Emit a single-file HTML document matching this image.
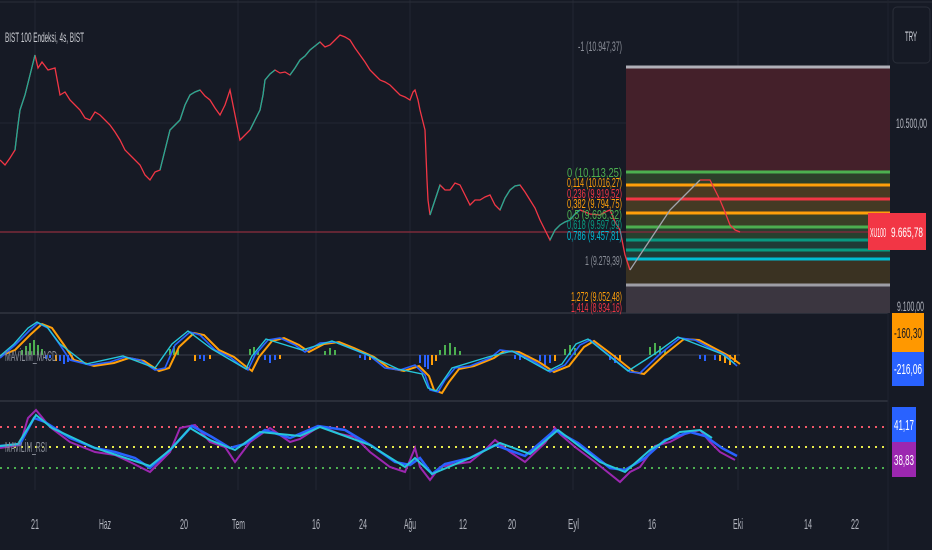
<!DOCTYPE html>
<html><head><meta charset="utf-8"><style>
html,body{margin:0;padding:0;background:#161a25;}
svg{display:block;font-family:"Liberation Sans",sans-serif;}
</style></head><body>
<svg width="932" height="550" viewBox="0 0 932 550" xmlns="http://www.w3.org/2000/svg">
<rect width="932" height="550" fill="#161a25"/>
<g stroke="#222632" stroke-width="1">
<line x1="0" y1="123" x2="888" y2="123"/>
<line x1="238" y1="0" x2="238" y2="490"/>
<line x1="316" y1="0" x2="316" y2="490"/>
<line x1="410" y1="0" x2="410" y2="490"/>
<line x1="573" y1="0" x2="573" y2="490"/>
<line x1="738" y1="0" x2="738" y2="490"/>
<line x1="35" y1="0" x2="35" y2="490"/>
</g>
<line x1="0" y1="2" x2="932" y2="2" stroke="#2a2e39"/>
<line x1="0" y1="313" x2="888" y2="313" stroke="#2a2e39" stroke-width="2"/>
<line x1="0" y1="401" x2="888" y2="401" stroke="#2a2e39" stroke-width="2"/>
<line x1="888" y1="0" x2="888" y2="550" stroke="#1f232e"/>

<rect x="626" y="66" width="264" height="106" fill="#44202a"/>
<rect x="626" y="172" width="264" height="13" fill="#2c3f2a"/>
<rect x="626" y="185" width="264" height="13" fill="#4a3a22"/>
<rect x="626" y="198" width="264" height="15" fill="#443a24"/>
<rect x="626" y="213" width="264" height="14" fill="#3a4026"/>
<rect x="626" y="227" width="264" height="13" fill="#27402e"/>
<rect x="626" y="240" width="264" height="19" fill="#1f3a36"/>
<rect x="626" y="259" width="264" height="26" fill="#3a3222"/>
<rect x="626" y="285" width="264" height="28" fill="#3b3640"/>
<g stroke-width="3">
<line x1="626" y1="67" x2="890" y2="67" stroke="#b0b0b8"/>
<line x1="626" y1="172" x2="890" y2="172" stroke="#4caf50"/>
<line x1="626" y1="185" x2="890" y2="185" stroke="#ff9f0a"/>
<line x1="626" y1="199" x2="890" y2="199" stroke="#f23645"/>
<line x1="626" y1="213" x2="890" y2="213" stroke="#ff9f0a"/>
<line x1="626" y1="227" x2="890" y2="227" stroke="#4caf50"/>
<line x1="626" y1="240" x2="890" y2="240" stroke="#089981"/>
<line x1="626" y1="250" x2="890" y2="250" stroke="#089981"/>
<line x1="626" y1="259" x2="890" y2="259" stroke="#00bcd4"/>
<line x1="626" y1="285" x2="890" y2="285" stroke="#9e9ea6"/>
</g>
<line x1="0" y1="232" x2="888" y2="232" stroke="#7a2a3a" stroke-width="1.5"/>
<polyline fill="none" stroke="#f23645" stroke-width="1.3" points="0,160 5,165 10,158 15,150 18,125 20,110 25,95 30,75 35,55 38,68 42,62 48,70 55,68 60,95 65,92 70,100 75,105 80,110 85,118 90,120 95,112 100,115 105,120 110,125 115,132 120,140 125,150 130,155 135,160 140,165 145,175 150,180 155,172 160,170 165,150 170,130 175,125 180,120 185,105 190,95 195,92 200,90 205,96 210,100 215,108 220,115 225,105 230,90 235,115 240,140 245,135 250,130 255,120 260,110 263,95 265,80 270,74 275,70 280,73 285,72 290,75 295,68 300,60 305,56 310,50 315,46 320,42 325,47 330,45 335,40 340,35 345,37 350,40 355,48 360,55 365,62 370,70 375,75 380,80 385,82 390,85 395,90 400,95 405,97 410,100 413,92 415,90 418,100 420,110 423,122 425,130 427,180 428,200 430,215 435,200 440,185 445,190 450,190 455,183 460,185 465,195 470,205 475,200 480,200 485,197 490,195 495,205 500,210 505,198 510,190 515,186 520,185 525,192 530,200 535,208 540,220 545,230 550,240 555,230 560,225 565,222 570,220 575,214 580,210 590,214 600,215 605,212 610,210 615,222 620,230 625,255 630,270"/>
<g fill="none" stroke="#22ab94" stroke-width="1.3">
<polyline points="15,150 18,125 20,110 25,95 30,75 35,55"/>
<polyline points="160,170 165,150 170,130 175,125 180,120 185,105 190,95 195,92 200,90"/>
<polyline points="250,130 255,120 260,110 263,95 265,80 270,74 275,70"/>
<polyline points="290,75 295,68 300,60 305,56 310,50 315,46 320,42"/>
<polyline points="430,215 435,200 440,185"/>
<polyline points="500,210 505,198 510,190 515,186 520,185"/>
<polyline points="550,240 555,230 560,225 565,222 570,220 575,214 580,210"/>
</g>
<polyline fill="none" stroke="#a0a4ad" stroke-width="1.3" points="630,270 640,255 650,240 660,225 670,210 680,200 690,190 700,180"/>
<polyline fill="none" stroke="#f23645" stroke-width="1.3" points="700,180 710,180 715,190 720,200 725,212 730,225 735,230 740,232"/>

<text x="5" y="42" fill="#c8cad0" font-size="14" textLength="79" lengthAdjust="spacingAndGlyphs">BIST 100 Endeksi, 4s, BIST</text>
<text x="578" y="51" fill="#8a8e98" font-size="14" textLength="44" lengthAdjust="spacingAndGlyphs">-1 (10.947,37)</text>
<g font-size="13">
<text x="567" y="177" fill="#4caf50" textLength="55" lengthAdjust="spacingAndGlyphs">0 (10.113,25)</text>
<text x="567" y="187" fill="#ff9f0a" textLength="55" lengthAdjust="spacingAndGlyphs">0,114 (10.016,27)</text>
<text x="567" y="198" fill="#f23645" textLength="55" lengthAdjust="spacingAndGlyphs">0,236 (9.919,52)</text>
<text x="567" y="208" fill="#ff9f0a" textLength="55" lengthAdjust="spacingAndGlyphs">0,382 (9.794,75)</text>
<text x="567" y="219" fill="#4caf50" textLength="55" lengthAdjust="spacingAndGlyphs">0,5 (9.696,32)</text>
<text x="567" y="229" fill="#089981" textLength="55" lengthAdjust="spacingAndGlyphs">0,618 (9.597,99)</text>
<text x="567" y="240" fill="#00bcd4" textLength="55" lengthAdjust="spacingAndGlyphs">0,786 (9.457,81)</text>
<text x="585" y="265" fill="#8a8e98" textLength="37" lengthAdjust="spacingAndGlyphs">1 (9.279,39)</text>
<text x="571" y="301" fill="#ff9f0a" textLength="51" lengthAdjust="spacingAndGlyphs">1,272 (9.052,48)</text>
<text x="571" y="312" fill="#f23645" textLength="51" lengthAdjust="spacingAndGlyphs">1,414 (8.934,16)</text>
</g>
<rect x="893" y="7" width="37" height="56" rx="4" fill="#161a25" stroke="#2a2e39"/>
<text x="905" y="41" fill="#d1d4dc" font-size="14" textLength="12" lengthAdjust="spacingAndGlyphs">TRY</text>
<text x="896" y="128" fill="#b2b5be" font-size="14" textLength="31" lengthAdjust="spacingAndGlyphs">10.500,00</text>
<text x="897" y="311" fill="#b2b5be" font-size="14" textLength="27" lengthAdjust="spacingAndGlyphs">9.100,00</text>
<rect x="868" y="213" width="20" height="37" fill="#f23645"/>
<text x="870" y="237" fill="#fff" font-size="13" textLength="16" lengthAdjust="spacingAndGlyphs">XU100</text>
<rect x="888" y="213" width="38" height="37" fill="#f23645"/>
<text x="891" y="237" fill="#fff" font-size="14" textLength="32" lengthAdjust="spacingAndGlyphs">9.665,78</text>

<line x1="0" y1="355" x2="740" y2="355" stroke="#3a3e4a"/>
<g stroke-width="2">
<path d="M22 355v-5M26 355v-9M30 355v-12M34 355v-15M38 355v-10M42 355v-6M170 355v-6M174 355v-9M178 355v-5M250 355v-6M254 355v-8M258 355v-4M325 355v-4M330 355v-7M335 355v-5M440 355v-5M445 355v-10M450 355v-12M455 355v-8M460 355v-4M565 355v-6M570 355v-10M575 355v-7M650 355v-8M655 355v-12M660 355v-9M665 355v-5" stroke="#4caf50"/>
<path d="M46 355v4M50 355v3M60 355v6M64 355v9M68 355v7M72 355v5M200 355v4M204 355v6M265 355v5M270 355v8M275 355v5M360 355v3M365 355v5M420 355v8M425 355v12M428 355v14M515 355v4M520 355v5M540 355v6M545 355v10M550 355v8M610 355v5M615 355v8M700 355v4M705 355v6M715 355v5" stroke="#2962ff"/>
<path d="M56 355v6M195 355v6M210 355v4M280 355v4M370 355v5M432 355v10M436 355v6M525 355v4M555 355v6M620 355v6M720 355v6M725 355v8M730 355v10M735 355v7" stroke="#ff9f0a"/>
</g>
<polyline fill="none" stroke="#ff9f0a" stroke-width="2" points="0,356 15,350 30,335 42,324 52,328 64,345 74,360 94,366 114,363 129,358 144,361 159,371 169,368 179,347 194,333 204,335 219,350 234,357 244,365 252,371 259,357 272,341 284,338 299,345 309,352 324,344 339,342 354,348 374,357 389,368 404,371 419,366 429,376 434,390 442,393 449,382 459,369 474,366 494,358 504,351 519,352 539,362 554,372 569,366 584,347 594,341 614,356 634,372 644,374 664,355 684,339 699,340 714,348 729,356 740,364"/>
<polyline fill="none" stroke="#2962ff" stroke-width="1.6" points="0,358 15,345 30,330 38,323 48,328 60,345 70,360 90,365 110,362 125,357 140,360 155,370 165,368 175,345 190,332 200,335 215,350 230,357 240,365 248,370 255,355 268,340 280,338 295,345 305,352 320,343 335,342 350,348 370,356 385,368 400,370 415,365 425,375 430,390 438,392 445,380 455,368 470,366 490,358 500,350 515,352 535,362 550,372 565,365 580,345 590,340 610,356 630,372 640,373 660,354 680,338 695,340 710,348 725,355 737,366"/>
<polyline fill="none" stroke="#26c6da" stroke-width="1.4" points="0,356 14,344 28,328 37,322 47,327 60,344 86,364 123,356 155,368 172,344 188,331 212,349 246,369 252,356 266,339 302,350 332,341 368,355 398,369 422,374 428,388 436,391 452,368 488,357 512,351 548,371 562,364 576,344 588,339 628,371 656,353 678,337 722,354 735,364"/>
<text x="5" y="361" fill="#8a8e98" font-size="15" textLength="52" lengthAdjust="spacingAndGlyphs">MAVİLİM_MACD</text>
<rect x="892" y="313" width="32" height="39" fill="#ff9800"/>
<text x="894" y="338" fill="#131722" font-size="15" textLength="28" lengthAdjust="spacingAndGlyphs">-160,30</text>
<rect x="892" y="352" width="32" height="34" fill="#2962ff"/>
<text x="894" y="374" fill="#fff" font-size="15" textLength="28" lengthAdjust="spacingAndGlyphs">-216,06</text>

<g stroke-width="2" stroke-dasharray="2 5">
<line x1="0" y1="427" x2="888" y2="427" stroke="#f0566a"/>
<line x1="0" y1="447" x2="888" y2="447" stroke="#e8ec4a"/>
<line x1="0" y1="468" x2="888" y2="468" stroke="#4caf50"/>
</g>
<polyline fill="none" stroke="#9c27b0" stroke-width="2" points="0,448 20,445 28,418 36,410 50,427 70,442 95,452 115,455 130,462 150,472 170,452 180,428 195,425 210,442 225,447 235,462 250,442 270,428 290,442 300,439 320,426 340,434 355,437 370,452 390,467 405,472 415,448 420,467 430,480 440,467 455,464 470,462 485,450 495,440 510,452 525,462 545,443 555,428 560,434 575,447 595,462 610,474 620,482 630,472 640,467 655,446 670,442 685,434 700,430 710,442 720,452 735,460"/>
<polyline fill="none" stroke="#2962ff" stroke-width="2.5" points="0,446 20,444 34,418 45,422 70,438 95,448 115,452 135,458 150,468 172,448 192,426 212,437 230,448 245,444 265,430 290,438 318,426 345,430 372,446 395,462 410,465 420,458 432,474 445,464 470,458 495,445 525,456 555,430 578,443 610,468 625,470 645,458 665,440 690,432 705,436 722,448 737,456"/>
<polyline fill="none" stroke="#26c6da" stroke-width="2" points="0,446 18,444 36,415 52,428 95,448 150,466 170,450 190,428 210,440 235,450 260,432 300,436 320,427 370,445 405,467 415,458 432,474 470,458 500,443 530,454 558,430 600,462 625,472 650,450 680,432 700,430 712,438"/>
<text x="5" y="452" fill="#8a8e98" font-size="15" textLength="42" lengthAdjust="spacingAndGlyphs">MAVİLİM_RSI</text>
<rect x="892" y="407" width="24" height="35" fill="#2962ff"/>
<text x="894" y="430" fill="#fff" font-size="15" textLength="20" lengthAdjust="spacingAndGlyphs">41,17</text>
<rect x="892" y="442" width="24" height="35" fill="#9c27b0"/>
<text x="894" y="465" fill="#fff" font-size="15" textLength="20" lengthAdjust="spacingAndGlyphs">38,83</text>

<g fill="#b2b5be" font-size="15">
<text x="31" y="529" textLength="8" lengthAdjust="spacingAndGlyphs">21</text>
<text x="99" y="529" textLength="12" lengthAdjust="spacingAndGlyphs">Haz</text>
<text x="180" y="529" textLength="8" lengthAdjust="spacingAndGlyphs">20</text>
<text x="232" y="529" textLength="13" lengthAdjust="spacingAndGlyphs">Tem</text>
<text x="312" y="529" textLength="8" lengthAdjust="spacingAndGlyphs">16</text>
<text x="359" y="529" textLength="8" lengthAdjust="spacingAndGlyphs">24</text>
<text x="404" y="529" textLength="12" lengthAdjust="spacingAndGlyphs">Ağu</text>
<text x="459" y="529" textLength="8" lengthAdjust="spacingAndGlyphs">12</text>
<text x="508" y="529" textLength="8" lengthAdjust="spacingAndGlyphs">20</text>
<text x="568" y="529" textLength="11" lengthAdjust="spacingAndGlyphs">Eyl</text>
<text x="648" y="529" textLength="8" lengthAdjust="spacingAndGlyphs">16</text>
<text x="733" y="529" textLength="10" lengthAdjust="spacingAndGlyphs">Eki</text>
<text x="804" y="529" textLength="8" lengthAdjust="spacingAndGlyphs">14</text>
<text x="851" y="529" textLength="8" lengthAdjust="spacingAndGlyphs">22</text>
</g>
</svg>
</body></html>
